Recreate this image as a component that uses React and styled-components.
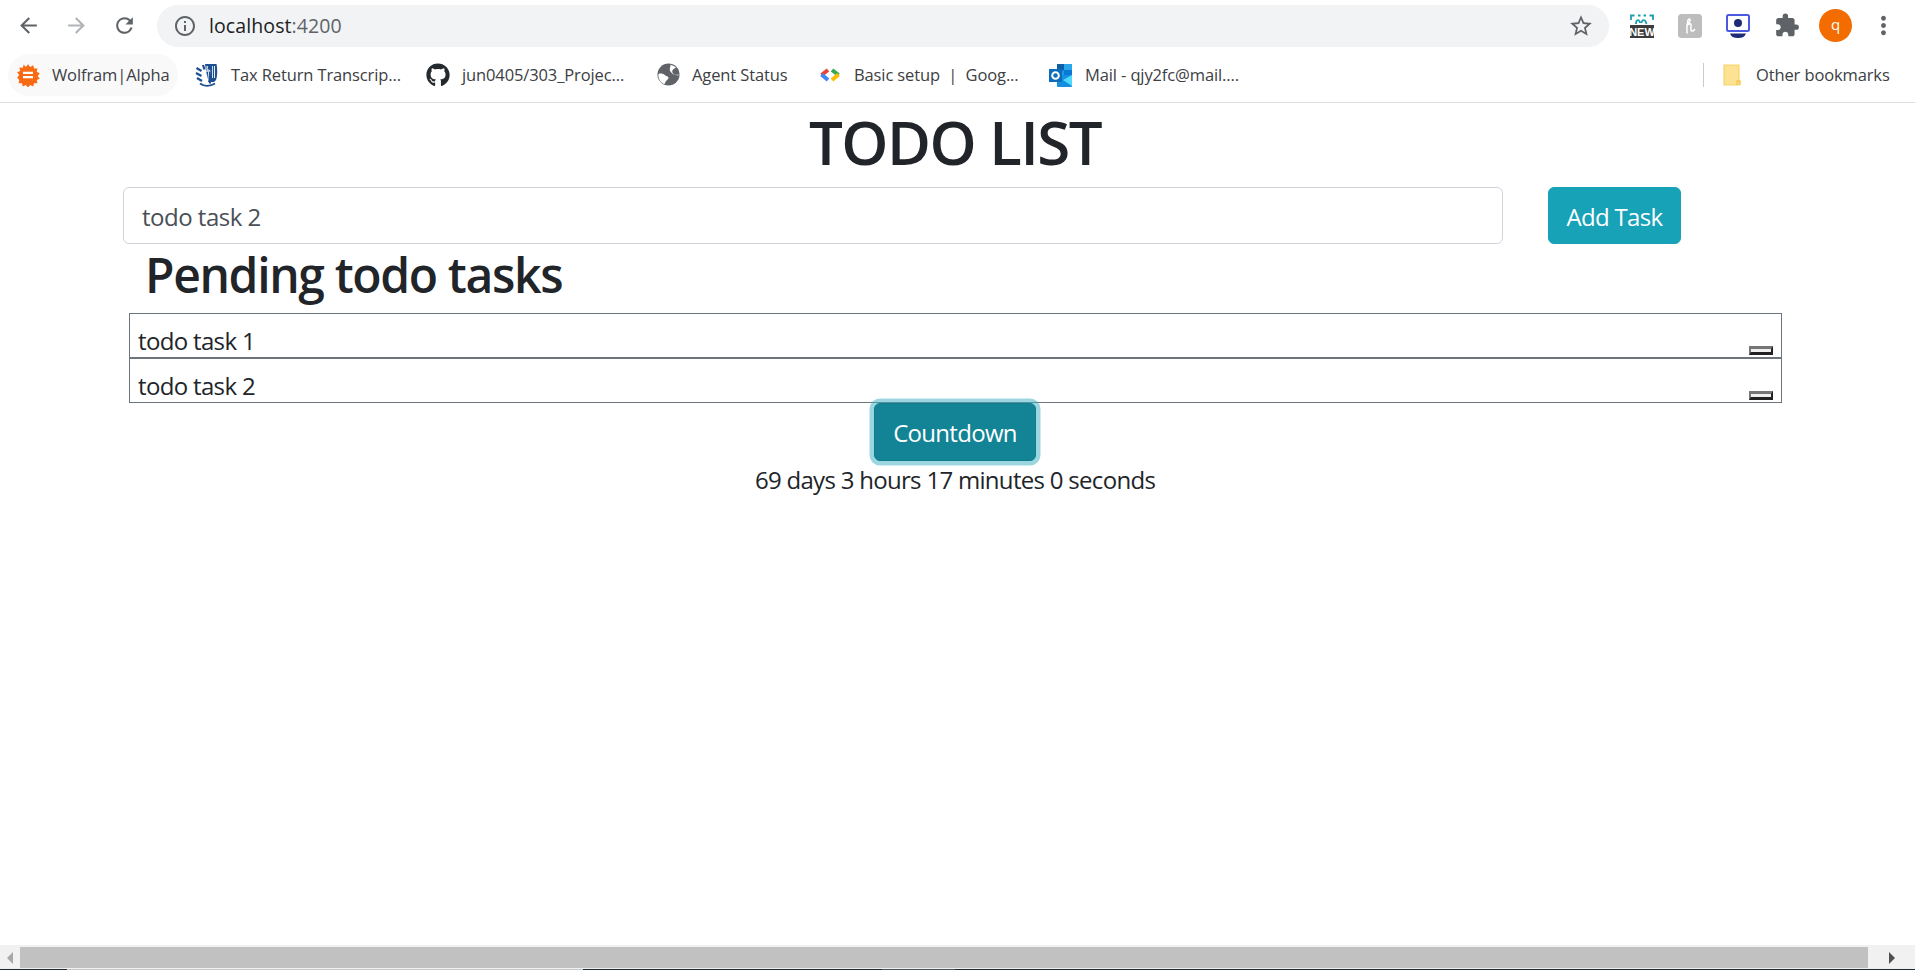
import React from 'react';
import styled, { createGlobalStyle } from 'styled-components';
import { MdArrowBack, MdArrowForward, MdRefresh, MdInfoOutline, MdStarBorder, MdExtension, MdMoreVert } from 'react-icons/md';
import { FaGithub } from 'react-icons/fa';

const GlobalStyle = createGlobalStyle`
  html, body {
    margin: 0;
    height: 100%;
    overflow: hidden;
    background: #fff;
  }
  body {
    font-family: 'Open Sans', 'Noto Sans', sans-serif;
    color: #212529;
  }
  * {
    box-sizing: border-box;
  }
`;

const Shell = styled.div`
  display: flex;
  flex-direction: column;
  height: 970px;
`;

/* browser chrome */
const Toolbar = styled.div`
  display: flex;
  align-items: center;
  height: 51px;
  padding: 0 0 0 18px;
`;

const NavIcon = styled.span`
  display: flex;
  font-size: 25px;
  margin: 0 ${(p) => p.$gap ?? 0}px 0 -2px;
  color: ${(p) => p.$color || '#5f6368'};
`;

const Omnibox = styled.div`
  display: flex;
  align-items: center;
  width: 1452px;
  height: 42px;
  margin-left: 20px;
  padding: 0 15px 0 16px;
  border-radius: 21px;
  background: #f1f3f4;
  font-size: 19.5px;
  letter-spacing: 0.1px;
  color: #202124;
`;

const Host = styled.span`
  margin-left: 12px;
  flex: 1;
`;

const Port = styled.span`
  color: #5f6368;
`;

const Extensions = styled.div`
  display: flex;
  align-items: center;
  margin-left: 21px;
`;

const ExtSlot = styled.div`
  display: flex;
  align-items: center;
  justify-content: center;
  width: ${(p) => p.$w}px;
  height: 34px;
  margin-left: ${(p) => p.$ml || 0}px;
  margin-right: ${(p) => p.$mr || 0}px;
`;

const Avatar = styled.div`
  display: flex;
  align-items: center;
  justify-content: center;
  width: 33px;
  height: 33px;
  border-radius: 50%;
  background: #f36c00;
  color: #fff;
  font-size: 15px;
  padding-bottom: 3px;
`;

const BookmarkBar = styled.div`
  display: flex;
  align-items: center;
  height: 52px;
  padding: 0 0 4px 8px;
  border-bottom: 1px solid #dadce0;
`;

const Bookmark = styled.div`
  display: flex;
  align-items: center;
  flex: none;
  gap: ${(p) => p.$gap ?? 12}px;
  width: ${(p) => p.$w}px;
  height: 42px;
  margin-left: ${(p) => p.$ml || 0}px;
  padding-left: 8px;
  border-radius: 21px;
  background: ${(p) => (p.$hover ? '#f9f9fa' : 'transparent')};
  font-size: 16.5px;
  letter-spacing: -0.12px;
  color: #3c4043;
  white-space: nowrap;
`;

const BookmarkSpacer = styled.div`
  flex: 1;
`;

const Separator = styled.div`
  width: 1px;
  height: 24px;
  margin-right: 11px;
  background: #c8cacc;
`;

/* page */
const Page = styled.main`
  flex: 1;
  width: 1910px;
`;

const Title = styled.h1`
  margin: 0 0 9px;
  padding-top: 3px;
  font-size: 60px;
  line-height: 72px;
  font-weight: 600;
  letter-spacing: -1.5px;
  text-align: center;
`;

const TaskForm = styled.form`
  display: flex;
  gap: 45px;
  margin: 0;
  padding-left: 123px;
`;

const TaskInput = styled.input`
  width: 1380px;
  height: 57px;
  padding: 2px 18px 0;
  border: 1px solid #ced4da;
  border-radius: 6px;
  outline: none;
  font: inherit;
  font-size: 24px;
  letter-spacing: -0.5px;
  color: #495057;
`;

const Button = styled.button`
  display: block;
  height: ${(p) => p.$h}px;
  width: ${(p) => p.$w}px;
  padding: 2px 0 0;
  border: 1px solid ${(p) => (p.$focus ? '#117a8b' : '#17a2b8')};
  border-radius: 6px;
  background: ${(p) => (p.$focus ? '#138496' : '#17a2b8')};
  box-shadow: ${(p) => (p.$focus ? '0 0 0 4.5px rgba(58, 176, 195, 0.5)' : 'none')};
  color: #fff;
  font: inherit;
  font-size: 24px;
  letter-spacing: -0.7px;
`;

const Subtitle = styled.h2`
  margin: 0 0 9px;
  padding: 2px 0 0 145px;
  font-size: 48px;
  line-height: 57.6px;
  font-weight: 600;
  letter-spacing: -1.35px;
`;

const TaskList = styled.div`
  margin: 0 128px 0 129px;
`;

const TaskRow = styled.div`
  display: flex;
  align-items: flex-end;
  justify-content: space-between;
  height: 45px;
  padding: 0 8px 2px 8px;
  border: 1px solid #6c757d;
  font-size: 24px;
  line-height: 36px;
  letter-spacing: -0.66px;
`;

const TaskText = styled.span`
  display: block;
  margin-bottom: -4px;
`;

const DeleteButton = styled.button`
  width: 24px;
  height: 9px;
  padding: 0;
  border-style: solid;
  border-width: 3px 2px;
  border-color: #767676 #212121 #212121 #767676;
  background: #efefef;
`;

const CountdownBlock = styled.div`
  display: flex;
  flex-direction: column;
  align-items: center;
`;

const Timer = styled.div`
  margin-top: 1px;
  font-size: 24px;
  line-height: 36px;
  letter-spacing: -0.7px;
`;

/* horizontal scrollbar drawn at the window bottom */
const Scrollbar = styled.div`
  display: flex;
  align-items: stretch;
  flex: none;
  height: 24px;
  padding: 2px 0 1px;
  background: #f1f1f1;
`;

const ScrollArrow = styled.div`
  display: flex;
  align-items: center;
  justify-content: center;
  flex: none;
  width: ${(p) => p.$w}px;
  &::before {
    content: '';
    border-style: solid;
    border-width: 6px 0 6px 6px;
    border-color: transparent transparent transparent #505050;
    transform: ${(p) => (p.$left ? 'rotate(180deg)' : 'none')};
    opacity: ${(p) => (p.$left ? 0.45 : 1)};
  }
`;

const ScrollThumb = styled.div`
  flex: 1;
  background: #c1c1c1;
`;

const TaskbarEdge = styled.div`
  flex: none;
  height: 1px;
  background: linear-gradient(
    to right,
    #1c2b33 67px,
    #c8c8c8 67px,
    #c8c8c8 583px,
    #1c2b33 583px,
    #1c2b33 882px,
    #46525a 882px,
    #46525a 955px,
    #1c2b33 955px
  );
`;

const WolframIcon = () => (
  <svg width="24" height="24" viewBox="0 0 24 24">
    <path
      fill="#f96b13"
      d="M12 0l2.400 3 3.400-1.800 .9 3.700 3.800-.1-.8 3.700 3.400 1.600-2.300 3 2.300 3-3.400 1.500 .8 3.700-3.800-.1-.9 3.700-3.400-1.800-2.400 2.900-2.400-2.900-3.400 1.800-.9-3.700-3.800 .1 .8-3.700L-.1 15l2.300-3-2.300-3 3.400-1.500-.8-3.700 3.800 .1 .9-3.700L9.600 3z"
      transform="translate(1.200 1.200) scale(.9)"
    />
    <path fill="#fff" d="M7 8.700h10v2.300H7zM7 13h10v2.300H7z" />
  </svg>
);

const IrsIcon = () => (
  <svg width="24" height="24" viewBox="0 0 24 24">
    <path fill="#1d4f91" d="M10 1h11.500c1 5 1 12-.5 16l-2 2H13z" />
    <path fill="#fff" d="M11.500 3h1.200v6h-1.200zM19 3h.9v12H19zM17 3h.8v12H17z" />
    <path fill="#fff" d="M13.500 6l2 2-1 8-3 5h-2l3-6z" />
    <path fill="#1d4f91" d="M14 8.500h1.600l.4 12h-2l-.6-5z" />
    <path fill="none" stroke="#1d4f91" strokeWidth="2.200" d="M1.500 5l5 3M1 10l5.500 3M2 15l5 3M8 2l1.500 4.500" />
    <path fill="none" stroke="#1d4f91" strokeWidth="2" d="M5 20.500c4 3 10 3 15 0" />
  </svg>
);

const GlobeIcon = () => (
  <svg width="23" height="23" viewBox="0 0 24 24">
    <circle cx="12" cy="12" r="11.500" fill="#5f6368" />
    <path
      fill="#fff"
      d="M1.500 11.500c2.500-1 5-.5 6.500 1 1.500 1.300 3.500 1 4 2.700.3 1.500-1.500 2.500-2.500 3.500-.8.9-1 2.400-1.800 3.300C3.500 20.500 1 16 1.500 11.500zM14 1.800c2.200.4 4 1.300 5.700 2.800-1.300 1-2.700 1.500-3.500 3-.7 1.500-.2 2.800 1 3.800 1.200 1 3.300 1 5.300.6v1c-2-.2-4.200-.5-6-1.600-2-1.300-3.500-3.100-3.200-5.300.2-1.500 1-2.900.7-4.300z"
    />
  </svg>
);

const CodeIcon = () => (
  <svg width="24" height="24" viewBox="0 0 24 24" fill="none" strokeWidth="4">
    <path stroke="#ea4335" d="M10 7L3.500 12" />
    <path stroke="#4285f4" d="M3.500 11.500l6.500 5.500" />
    <path stroke="#34a853" d="M14 7l6.500 5" />
    <path stroke="#fbbc04" d="M20.500 11.500L14 17" />
  </svg>
);

const OutlookIcon = () => (
  <svg width="24" height="26" viewBox="0 0 24 26">
    <path fill="#0a78d4" d="M8 2h15v11H8z" />
    <path fill="#28a8ea" d="M15 2h8v6h-8z" />
    <path fill="#0f5ea8" d="M8 2h7v6H8z" />
    <path fill="#14a0e8" d="M8 13l7-5v5z" />
    <path fill="#1490df" d="M8 13h15v11a1 1 0 0 1-1 1H9a1 1 0 0 1-1-1z" />
    <path fill="#50d9ff" d="M23 13v11l-9-6z" />
    <path fill="#0f6cbd" d="M0 7h13v13H0z" />
    <circle cx="6.500" cy="13.500" r="3.300" fill="none" stroke="#fff" strokeWidth="2" />
  </svg>
);

const FolderIcon = () => (
  <svg width="18" height="22" viewBox="0 0 18 22">
    <path fill="#fde293" stroke="#f6d46a" strokeWidth="1.200" d="M1 1h15v20H1z" />
    <path fill="none" stroke="#f3c94f" strokeWidth="1.400" d="M14 21v-4h3v4" />
  </svg>
);

const NewIcon = () => (
  <svg width="24" height="24" viewBox="0 0 24 24">
    <path fill="none" stroke="#1b9fae" strokeWidth="1.800" d="M1 6V1.500h3.500M8 1.500h2.500M13.500 1.500H16M19.500 1.500H23V6" />
    <path fill="none" stroke="#1b9fae" strokeWidth="1.800" d="M6 10c0-5 3.500-5 4-1M11.500 9c.3-4 4-4 5 1" />
    <path fill="#3c3c3c" d="M0 11h24v13H0z" />
    <text x="12" y="22" fontSize="11" fontWeight="700" fill="#fff" textAnchor="middle" fontFamily="Liberation Sans, sans-serif">NEW</text>
  </svg>
);

const TernIcon = () => (
  <svg width="24" height="24" viewBox="0 0 24 24">
    <rect width="24" height="24" rx="3.500" fill="#bdbdbd" />
    <path
      fill="none"
      stroke="#fff"
      strokeWidth="1.500"
      strokeLinecap="round"
      d="M9 19c-.3-4-.2-9 1-13 .5-1.500 2.500-1.500 2 .5-.5 2-2 3.500-3.200 5.500 1-1.500 3.500-3 4.200-1.500.5 1.500-.8 4 0 5.800.5 1.200 2.500.8 3.500-.8"
    />
  </svg>
);

const MonitorIcon = () => (
  <svg width="24" height="24" viewBox="0 0 24 24">
    <rect x="1" y="1" width="22" height="16" rx="1.500" fill="#fff" stroke="#4a5ae0" strokeWidth="2" />
    <circle cx="12" cy="9" r="4" fill="#1f2a78" />
    <path fill="#1f2a78" d="M4 19.500h16c-1 3-3.500 4.500-8 4.500s-7-1.500-8-4.500z" />
  </svg>
);

export default function App() {
  return (
    <Shell>
      <GlobalStyle />
      <Toolbar>
        <NavIcon $gap={25}><MdArrowBack /></NavIcon>
        <NavIcon $gap={25} $color="#b0b3b7"><MdArrowForward /></NavIcon>
        <NavIcon><MdRefresh /></NavIcon>
        <Omnibox>
          <MdInfoOutline size={24} color="#5f6368" />
          <Host>localhost<Port>:4200</Port></Host>
          <MdStarBorder size={26} color="#5f6368" />
        </Omnibox>
        <Extensions>
          <ExtSlot $w={24} $mr={24}><NewIcon /></ExtSlot>
          <ExtSlot $w={24} $mr={24}><TernIcon /></ExtSlot>
          <ExtSlot $w={24} $mr={24}><MonitorIcon /></ExtSlot>
          <ExtSlot $w={26} $mr={19}><MdExtension size={27} color="#5f6368" /></ExtSlot>
          <Avatar>q</Avatar>
          <ExtSlot $w={30} $ml={16}><MdMoreVert size={29} color="#5f6368" /></ExtSlot>
        </Extensions>
      </Toolbar>
      <BookmarkBar>
        <Bookmark $w={170} $hover><WolframIcon />Wolfram|Alpha</Bookmark>
        <Bookmark $w={231} $ml={9}><IrsIcon />Tax Return Transcrip...</Bookmark>
        <Bookmark $w={231}><FaGithub size={24} color="#24292e" />jun0405/303_Projec...</Bookmark>
        <Bookmark $w={161}><GlobeIcon />Agent Status</Bookmark>
        <Bookmark $w={231}><CodeIcon />Basic setup&nbsp; |&nbsp; Goog...</Bookmark>
        <Bookmark $w={210}><OutlookIcon />Mail - qjy2fc@mail....</Bookmark>
        <BookmarkSpacer />
        <Separator />
        <Bookmark $w={200} $gap={15}><FolderIcon />Other bookmarks</Bookmark>
      </BookmarkBar>
      <Page>
        <Title>TODO LIST</Title>
        <TaskForm onSubmit={(e) => e.preventDefault()}>
          <TaskInput readOnly value="todo task 2" />
          <Button type="submit" $w={133} $h={57}>Add Task</Button>
        </TaskForm>
        <Subtitle>Pending todo tasks</Subtitle>
        <TaskList>
          <TaskRow>
            <TaskText>todo task 1</TaskText>
            <DeleteButton />
          </TaskRow>
          <TaskRow>
            <TaskText>todo task 2</TaskText>
            <DeleteButton />
          </TaskRow>
        </TaskList>
        <CountdownBlock>
          <Button $focus $w={162} $h={58}>Countdown</Button>
          <Timer>69 days 3 hours 17 minutes 0 seconds</Timer>
        </CountdownBlock>
      </Page>
      <Scrollbar>
        <ScrollArrow $left $w={20} />
        <ScrollThumb />
        <ScrollArrow $w={47} />
      </Scrollbar>
      <TaskbarEdge />
    </Shell>
  );
}
